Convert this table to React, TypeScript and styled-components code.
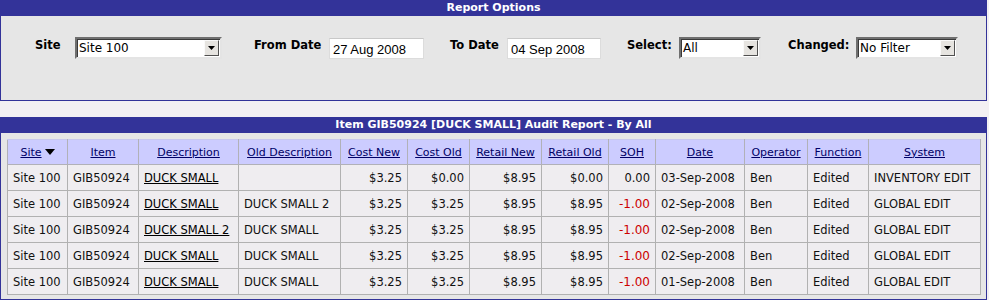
import React from 'react'
import styled, { createGlobalStyle } from 'styled-components'

const GlobalStyle = createGlobalStyle`
  html, body {
    margin: 0;
    padding: 0;
    background: #f3f0f3;
    font-family: 'DejaVu Sans', Verdana, sans-serif;
    font-size: 11px;
    color: #000;
  }
`

const Page = styled.div`
  width: 987px;
  display: flex;
  flex-direction: column;
  gap: 16px;
`

const Panel = styled.section`
  display: flex;
  flex-direction: column;
  border: 1px solid #333399;
  border-top: 0;
  background: #e6e6e6;
`

const PanelTitle = styled.div`
  height: 16px;
  background: #333399;
  color: #fff;
  font-weight: bold;
  font-size: 11px;
  line-height: 16px;
  text-align: center;
`

const OptionsBody = styled.div`
  height: 84px;
  box-sizing: border-box;
  padding: 21px 0 0 34px;
  display: flex;
  align-items: flex-start;
`

const Field = styled.div<{ $offset: number }>`
  display: flex;
  align-items: flex-start;
  margin-left: ${(p) => p.$offset}px;
`

const FieldLabel = styled.label<{ $width: number }>`
  width: ${(p) => p.$width}px;
  font-weight: bold;
  font-size: 11.5px;
  line-height: 14px;
  padding-top: 1px;
  white-space: nowrap;
`

const SelectBox = styled.div<{ $width: number }>`
  width: ${(p) => p.$width}px;
  height: 22px;
  box-sizing: border-box;
  display: flex;
  align-items: center;
  background: #fff;
  border-style: solid;
  border-width: 2px;
  border-color: #6f6f6f #e4e4e4 #e4e4e4 #6f6f6f;
  box-shadow: inset 1px 1px 0 #3a3a3a;
`

const SelectValue = styled.span`
  flex: 1;
  padding-left: 2px;
  font-size: 12px;
  line-height: 16px;
  white-space: nowrap;
`

const SelectButton = styled.span`
  width: 15px;
  height: 16px;
  margin-right: 1px;
  box-sizing: border-box;
  display: flex;
  align-items: center;
  justify-content: center;
  background: #e6e4e0;
  border-style: solid;
  border-width: 1px;
  border-color: #fafafa #505050 #505050 #fafafa;
`

const DateInput = styled.input<{ $width: number }>`
  width: ${(p) => p.$width}px;
  height: 21px;
  box-sizing: border-box;
  margin: 1px 0 0;
  padding: 1px 3px 0;
  border: 1px solid #dcdcdc;
  border-top-color: #c8c8c8;
  background: #fff;
  font-family: 'Liberation Sans', Arial, sans-serif;
  font-size: 13px;
  color: #000;
  outline: none;
`

const TableBody = styled.div`
  padding: 6px 6px 4px 6px;
`

const ReportTable = styled.table`
  width: 973px;
  border-collapse: collapse;
  table-layout: fixed;
  background: #efedf0;
`

const HeadCell = styled.th`
  height: 24px;
  padding: 0 4px;
  background: #ccccff;
  border: 1px solid #b1b1b8;
  border-top-color: #c8c8ee;
  font-weight: normal;
  font-size: 11px;
  text-align: center;
  white-space: nowrap;
`

const HeadLink = styled.a`
  color: #000066;
  text-decoration: underline;
  display: inline-flex;
  align-items: center;
  gap: 3px;
`

const Cell = styled.td<{ $align?: 'left' | 'right'; $negative?: boolean }>`
  height: 25px;
  padding: 0 5px;
  border: 1px solid #b1b1b1;
  font-size: 11.5px;
  white-space: nowrap;
  overflow: hidden;
  text-align: ${(p) => p.$align ?? 'left'};
  color: ${(p) => (p.$negative ? '#cc0000' : '#111')};
  ${(p) => (p.$negative ? 'font-size: 12px;' : '')}
`

const ItemLink = styled.a`
  color: #000;
  text-decoration: underline;
`

const DropArrow = () => (
  <svg width="7" height="4" viewBox="0 0 7 4">
    <path d="M0 0h7L3.5 4z" fill="#000" />
  </svg>
)

const SortArrow = () => (
  <svg width="10" height="6" viewBox="0 0 10 6">
    <path d="M0 0h10L5 6z" fill="#000" />
  </svg>
)

const Select = ({ width, value }: { width: number; value: string }) => (
  <SelectBox $width={width}>
    <SelectValue>{value}</SelectValue>
    <SelectButton>
      <DropArrow />
    </SelectButton>
  </SelectBox>
)

const columns = [
  { title: 'Site', width: 60, sorted: true },
  { title: 'Item', width: 71 },
  { title: 'Description', width: 100 },
  { title: 'Old Description', width: 102 },
  { title: 'Cost New', width: 67 },
  { title: 'Cost Old', width: 62 },
  { title: 'Retail New', width: 72 },
  { title: 'Retail Old', width: 67 },
  { title: 'SOH', width: 47 },
  { title: 'Date', width: 89 },
  { title: 'Operator', width: 63 },
  { title: 'Function', width: 61 },
  { title: 'System', width: 112 },
]

type AuditRow = {
  desc: string
  oldDesc: string
  costNew: string
  costOld: string
  retailNew: string
  retailOld: string
  soh: string
  date: string
  system: string
}

const rows: AuditRow[] = [
  { desc: 'DUCK SMALL', oldDesc: '', costNew: '$3.25', costOld: '$0.00', retailNew: '$8.95', retailOld: '$0.00', soh: '0.00', date: '03-Sep-2008', system: 'INVENTORY EDIT' },
  { desc: 'DUCK SMALL', oldDesc: 'DUCK SMALL 2', costNew: '$3.25', costOld: '$3.25', retailNew: '$8.95', retailOld: '$8.95', soh: '-1.00', date: '02-Sep-2008', system: 'GLOBAL EDIT' },
  { desc: 'DUCK SMALL 2', oldDesc: 'DUCK SMALL', costNew: '$3.25', costOld: '$3.25', retailNew: '$8.95', retailOld: '$8.95', soh: '-1.00', date: '02-Sep-2008', system: 'GLOBAL EDIT' },
  { desc: 'DUCK SMALL', oldDesc: 'DUCK SMALL', costNew: '$3.25', costOld: '$3.25', retailNew: '$8.95', retailOld: '$8.95', soh: '-1.00', date: '02-Sep-2008', system: 'GLOBAL EDIT' },
  { desc: 'DUCK SMALL', oldDesc: 'DUCK SMALL', costNew: '$3.25', costOld: '$3.25', retailNew: '$8.95', retailOld: '$8.95', soh: '-1.00', date: '01-Sep-2008', system: 'GLOBAL EDIT' },
]

export default function App() {
  return (
    <>
      <GlobalStyle />
      <Page>
        <Panel>
          <PanelTitle>Report Options</PanelTitle>
          <OptionsBody>
            <Field $offset={0}>
              <FieldLabel $width={40}>Site</FieldLabel>
              <Select width={147} value="Site 100" />
            </Field>
            <Field $offset={32}>
              <FieldLabel $width={75}>From Date</FieldLabel>
              <DateInput $width={95} defaultValue="27 Aug 2008" />
            </Field>
            <Field $offset={26}>
              <FieldLabel $width={57}>To Date</FieldLabel>
              <DateInput $width={94} defaultValue="04 Sep 2008" />
            </Field>
            <Field $offset={26}>
              <FieldLabel $width={52}>Select:</FieldLabel>
              <Select width={82} value="All" />
            </Field>
            <Field $offset={27}>
              <FieldLabel $width={68}>Changed:</FieldLabel>
              <Select width={102} value="No Filter" />
            </Field>
          </OptionsBody>
        </Panel>

        <Panel>
          <PanelTitle>Item GIB50924 [DUCK SMALL] Audit Report - By All</PanelTitle>
          <TableBody>
            <ReportTable>
              <colgroup>
                {columns.map((c) => (
                  <col key={c.title} style={{ width: c.width }} />
                ))}
              </colgroup>
              <thead>
                <tr>
                  {columns.map((c) => (
                    <HeadCell key={c.title}>
                      <HeadLink href="#">
                        {c.title}
                        {c.sorted && <SortArrow />}
                      </HeadLink>
                    </HeadCell>
                  ))}
                </tr>
              </thead>
              <tbody>
                {rows.map((r, i) => (
                  <tr key={i}>
                    <Cell>Site 100</Cell>
                    <Cell>GIB50924</Cell>
                    <Cell>
                      <ItemLink href="#">{r.desc}</ItemLink>
                    </Cell>
                    <Cell>{r.oldDesc}</Cell>
                    <Cell $align="right">{r.costNew}</Cell>
                    <Cell $align="right">{r.costOld}</Cell>
                    <Cell $align="right">{r.retailNew}</Cell>
                    <Cell $align="right">{r.retailOld}</Cell>
                    <Cell $align="right" $negative={r.soh.startsWith('-')}>
                      {r.soh}
                    </Cell>
                    <Cell>{r.date}</Cell>
                    <Cell>Ben</Cell>
                    <Cell>Edited</Cell>
                    <Cell>{r.system}</Cell>
                  </tr>
                ))}
              </tbody>
            </ReportTable>
          </TableBody>
        </Panel>
      </Page>
    </>
  )
}
